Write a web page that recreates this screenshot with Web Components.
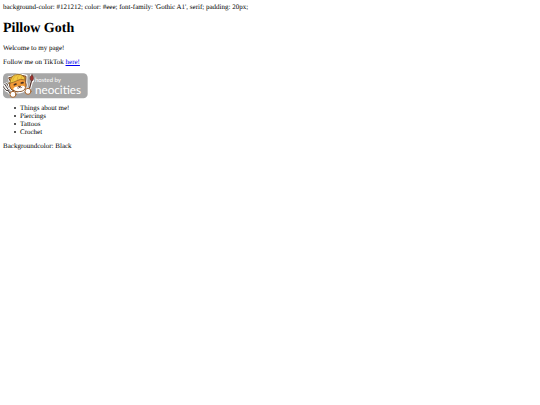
<!DOCTYPE html>
<html lang="en">
<head>
<meta charset="utf-8">
<title>Pillow Goth</title>
<style>
body { margin: 0; background: #fff; color: #000; font-family: "Liberation Serif", "Times New Roman", serif; font-size: 7px; line-height: 8px; text-rendering: geometricPrecision; }
</style>
</head>
<body>
<profile-page>
  <span slot="intro">background-color: #121212; color: #eee; font-family: 'Gothic A1', serif; padding: 20px;</span>
  <span slot="title">Pillow Goth</span>
  <interest-list></interest-list>
</profile-page>
<script>
customElements.define('neocities-badge', class extends HTMLElement {
  constructor() {
    super();
    this.attachShadow({ mode: 'open' }).innerHTML = `
      <style>
        :host { display: block; }
        a { display: block; width: fit-content; }
        svg { display: block; width: 85px; height: 26px; }
        text { fill: #fff; font-family: Lato, sans-serif; }
      </style>
      <a href="https://neocities.org" aria-label="Hosted by Neocities">
        <svg viewBox="0 0 255 78">
          <rect x="0" y="1" width="254" height="75" rx="13" fill="#a7a7a7"/>
          <g stroke-linecap="round" stroke-linejoin="round">
            <path d="M4 34l10 15M0 40l10 14M11 31l9 17M10 50l16 18" fill="none" stroke="#fff" stroke-width="6"/>
            <path d="M5 34l9 13M0 40l9 12q7 4 11-5L11 31M14 51l12 17" fill="none" stroke="#4b403c" stroke-width="3"/>
            <path d="M85 7q6 8 4 17l-3 2-7 26" fill="none" stroke="#fff" stroke-width="8"/>
            <path d="M85 25l-7 27" stroke="#5b382f" stroke-width="4"/>
            <path d="M87 5c-7 5-7 13-3 18h5c4-6 3-12-2-18z" fill="#a3302d" stroke="#482822" stroke-width="2"/>
            <path d="M17 12L34 9Q44 0 56 5L71 8 70 28Q76 47 59 56Q42 64 25 52Q14 42 20 28z" fill="#fff" stroke="#fff" stroke-width="5"/>
            <path d="M18 14L34 10Q44 2 56 7L69 10 68 28Q74 46 58 54Q42 61 27 51Q15 41 22 27z" fill="#f09a37" stroke="#6d4328" stroke-width="3"/>
            <path d="M21 28Q24 4 45 4Q63 4 67 21Q51 16 42 23Q31 29 17 31z" fill="#f3ca43" stroke="#80571f" stroke-width="2"/>
            <path d="M29 24Q30 10 42 7M43 20Q42 10 48 7M55 16l2-6" fill="none" stroke="#d3a034" stroke-width="2"/>
            <path d="M30 48Q36 39 47 41Q60 35 66 42Q65 52 53 54Q38 57 30 48z" fill="#fff"/>
            <path d="M34 35l5-2M55 30l5-1" stroke="#442b22" stroke-width="5"/>
            <path d="M47 40h6l-3 3z" fill="#503027" stroke="#503027" stroke-width="2"/>
            <path d="M50 43q-3 6-7 2M50 43q4 4 7 0" fill="none" stroke="#704a36" stroke-width="2"/>
            <circle cx="30" cy="64" r="9" fill="#fff" stroke="#a8672f" stroke-width="3"/>
            <circle cx="75" cy="55" r="9" fill="#fff" stroke="#a8672f" stroke-width="3"/>
          </g>
          <text x="96" y="27" font-size="18">hosted by</text>
          <text x="96" y="62" font-size="35">neocities</text>
        </svg>
      </a>`;
  }
});
customElements.define('interest-list', class extends HTMLElement {
  constructor() {
    super();
    this.attachShadow({ mode: 'open' }).innerHTML = `
      <style>
        :host { display: block; }
        ul { margin: 0; padding-left: 11px; list-style: none; }
        li { display: flex; align-items: center; gap: 4px; }
        li::before { content: ""; width: 2px; height: 2px; background: #222; border-radius: 1px; }
      </style>
      <ul><li>Things about me!</li><li>Piercings</li><li>Tattoos</li><li>Crochet</li></ul>`;
  }
});
customElements.define('profile-page', class extends HTMLElement {
  constructor() {
    super();
    this.attachShadow({ mode: 'open' }).innerHTML = `
      <style>
        :host { display: block; padding: 3px; }
        h1 { margin: 10px 0 7px; font-size: 14px; line-height: 16px; }
        p { margin: 6px 0; }
        a { color: #00e; }
        neocities-badge { margin: 7px 0 5px; }
      </style>
      <main>
        <slot name="intro"></slot>
        <h1><slot name="title"></slot></h1>
        <p>Welcome to my page!</p>
        <p>Follow me on TikTok <a href="https://www.tiktok.com">here!</a></p>
        <neocities-badge></neocities-badge>
        <slot></slot>
        <p>Backgroundcolor: Black</p>
      </main>`;
  }
});
</script>
</body>
</html>
